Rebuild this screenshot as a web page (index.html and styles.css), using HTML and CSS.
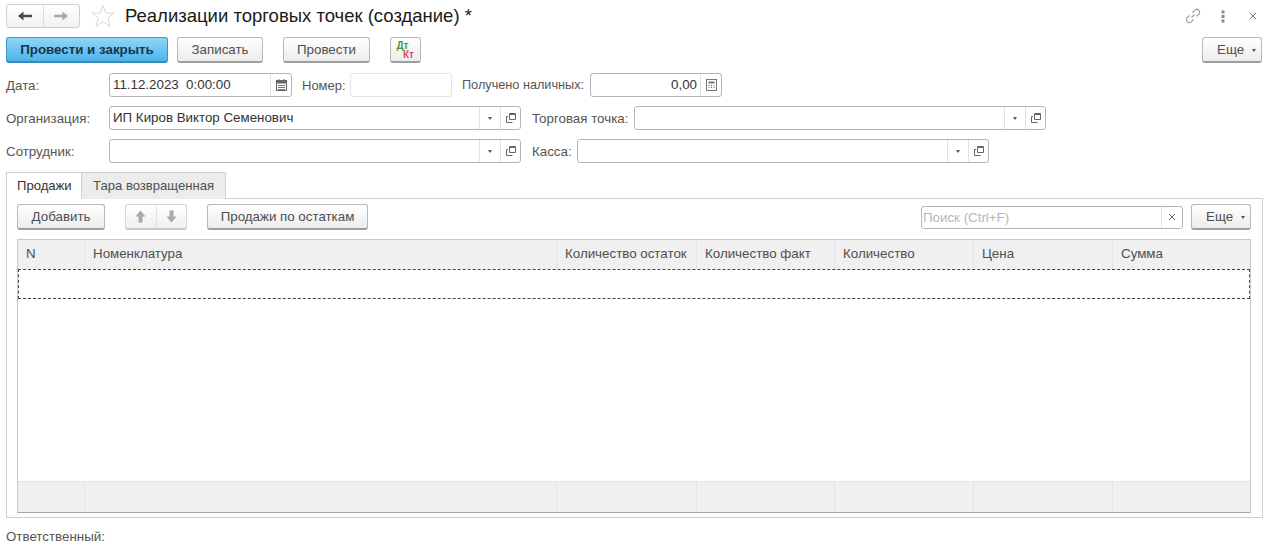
FILE: index.html
```html
<!DOCTYPE html>
<html lang="ru">
<head>
    <meta charset="UTF-8">
    <title>Реализации торговых точек (создание)</title>
    <link rel="stylesheet" href="styles.css">
</head>
<body>
    <header class="title-bar">
        <div class="nav-group">
            <button class="nav-btn">
                <svg width="16" height="12" viewBox="0 0 16 12"><path d="M1 6 6.5 1.5V4.8H15V7.2H6.5V10.5Z" fill="#4a4a4a"/></svg>
            </button>
            <button class="nav-btn">
                <svg width="16" height="12" viewBox="0 0 16 12"><path d="M15 6 9.500 1.500V4.800H1V7.200H9.500V10.500Z" fill="#a8a8a8"/></svg>
            </button>
        </div>
        <svg class="star" width="24" height="24" viewBox="0 0 24 24"><path d="M12 1.500 15 9H23L16.800 14 19 22.500 12 17.800 5 22.500 7.200 14 1 9H9Z" fill="#fff" stroke="#d8d8d8"/></svg>
        <h1 class="title">Реализации торговых точек (создание) *</h1>
        <div class="window-icons">
            <svg width="16" height="16" viewBox="0 0 16 16" fill="none" stroke="#a0a0a0" stroke-width="1.200"><path d="M6.500 9.500 9.500 6.500M7.500 4.500 9.800 2.200a2.600 2.600 0 0 1 4 4L11.500 8.500M8.500 11.500 6.200 13.800a2.600 2.600 0 0 1-4-4L4.500 7.500"/></svg>
            <svg class="icon-dots" width="4" height="13" viewBox="0 0 4 13" fill="#8a8a8a"><rect x="0.500" y="0.500" width="3" height="3"/><rect x="0.500" y="5" width="3" height="3"/><rect x="0.500" y="9.500" width="3" height="3"/></svg>
            <svg class="icon-close" width="10" height="10" viewBox="0 0 10 10" stroke="#777" stroke-width="1"><path d="M2 2 8 8M8 2 2 8"/></svg>
        </div>
    </header>

    <div class="command-bar">
        <button class="btn btn-primary">Провести и закрыть</button>
        <button class="btn btn-save">Записать</button>
        <button class="btn btn-post">Провести</button>
        <button class="btn btn-dtkt"><span class="dt">Дт</span><span class="kt">Кт</span></button>
        <button class="btn btn-more push-right">Еще <span class="caret"></span></button>
    </div>

    <div class="form-row">
        <label class="label label-main">Дата:</label>
        <div class="field field-date">
            <span class="field-value">11.12.2023&nbsp; 0:00:00</span>
            <span class="field-btn">
                <svg width="11" height="12" viewBox="0 0 11 12"><rect x="0.500" y="1.500" width="10" height="10" fill="#fff" stroke="#666"/><rect x="0.500" y="1.500" width="10" height="3" fill="#666"/><path d="M2 6.500H9M2 8.500H9M2 10.500H9" stroke="#777"/><path d="M3 0V2M8 0V2" stroke="#666"/></svg>
            </span>
        </div>
        <label class="label label-number">Номер:</label>
        <div class="field field-number disabled"></div>
        <label class="label label-cash">Получено наличных:</label>
        <div class="field field-cash">
            <span class="field-value right">0,00</span>
            <span class="field-btn">
                <svg width="11" height="12" viewBox="0 0 11 12"><rect x="0.500" y="0.500" width="10" height="11" fill="#fff" stroke="#777"/><rect x="2.500" y="2.500" width="6" height="2" fill="#777"/><path d="M2.500 6.500h1M5 6.500h1M7.500 6.500h1M2.500 8.500h1M5 8.500h1M7.500 8.500h1" stroke="#666"/></svg>
            </span>
        </div>
    </div>

    <div class="form-row">
        <label class="label label-main">Организация:</label>
        <div class="field field-org">
            <span class="field-value">ИП Киров Виктор Семенович</span>
            <span class="field-btn"><span class="caret dark"></span></span>
            <span class="field-btn"><svg width="12" height="12" viewBox="0 0 12 12" fill="none" stroke="#666"><path d="M4.500 1.500H10.500V7.500H4.500Z"/><path d="M4.500 2.500H10.500" /><path d="M1.500 4.500V10.500H7.500M1.500 4.500H3"/></svg></span>
        </div>
        <label class="label label-point">Торговая точка:</label>
        <div class="field field-org">
            <span class="field-value"></span>
            <span class="field-btn"><span class="caret dark"></span></span>
            <span class="field-btn"><svg width="12" height="12" viewBox="0 0 12 12" fill="none" stroke="#666"><path d="M4.500 1.500H10.500V7.500H4.500Z"/><path d="M4.500 2.500H10.500" /><path d="M1.500 4.500V10.500H7.500M1.500 4.500H3"/></svg></span>
        </div>
    </div>

    <div class="form-row">
        <label class="label label-main">Сотрудник:</label>
        <div class="field field-org">
            <span class="field-value"></span>
            <span class="field-btn"><span class="caret dark"></span></span>
            <span class="field-btn"><svg width="12" height="12" viewBox="0 0 12 12" fill="none" stroke="#666"><path d="M4.500 1.500H10.500V7.500H4.500Z"/><path d="M4.500 2.500H10.500" /><path d="M1.500 4.500V10.500H7.500M1.500 4.500H3"/></svg></span>
        </div>
        <label class="label label-kassa">Касса:</label>
        <div class="field field-org">
            <span class="field-value"></span>
            <span class="field-btn"><span class="caret dark"></span></span>
            <span class="field-btn"><svg width="12" height="12" viewBox="0 0 12 12" fill="none" stroke="#666"><path d="M4.500 1.500H10.500V7.500H4.500Z"/><path d="M4.500 2.500H10.500" /><path d="M1.500 4.500V10.500H7.500M1.500 4.500H3"/></svg></span>
        </div>
    </div>

    <div class="tabs">
        <div class="tab active">Продажи</div>
        <div class="tab">Тара возвращенная</div>
    </div>

    <section class="tab-panel">
        <div class="toolbar">
            <button class="btn btn-add">Добавить</button>
            <div class="arrow-group">
                <button class="arrow-btn"><svg width="11" height="13" viewBox="0 0 11 13"><path d="M5.500 0.500 10.500 6.500H7.500V12.500H3.500V6.500H0.500Z" fill="#a9a9a9"/></svg></button>
                <button class="arrow-btn"><svg width="11" height="13" viewBox="0 0 11 13"><path d="M5.500 12.500 10.500 6.500H7.500V0.500H3.500V6.500H0.500Z" fill="#a9a9a9"/></svg></button>
            </div>
            <button class="btn btn-rest">Продажи по остаткам</button>
            <div class="field field-search push-right">
                <span class="field-value placeholder">Поиск (Ctrl+F)</span>
                <span class="field-btn"><svg width="8" height="8" viewBox="0 0 8 8" stroke="#666"><path d="M1 1 7 7M7 1 1 7"/></svg></span>
            </div>
            <button class="btn btn-more">Еще <span class="caret"></span></button>
        </div>

        <div class="grid">
            <div class="grid-row grid-head">
                <div class="cell">N</div>
                <div class="cell">Номенклатура</div>
                <div class="cell">Количество остаток</div>
                <div class="cell">Количество факт</div>
                <div class="cell">Количество</div>
                <div class="cell">Цена</div>
                <div class="cell">Сумма</div>
            </div>
            <div class="grid-current"></div>
            <div class="grid-body"></div>
            <div class="grid-row grid-foot">
                <div class="cell"></div>
                <div class="cell"></div>
                <div class="cell"></div>
                <div class="cell"></div>
                <div class="cell"></div>
                <div class="cell"></div>
                <div class="cell"></div>
            </div>
        </div>
    </section>

    <footer class="responsible">Ответственный:</footer>
</body>
</html>
```

FILE: styles.css
```css
* {
    box-sizing: border-box;
}
html, body {
    height: 100%;
}
body {
    margin: 0;
    padding: 4px 6px 0;
    background-color: #fff;
    color: #4f4f4f;
    font-family: "Liberation Sans", Arial, sans-serif;
    font-size: 13.33px;
    overflow: hidden;
}
button {
    font-family: inherit;
    font-size: inherit;
    color: inherit;
    padding: 0;
}

/* title */
.title-bar {
    display: flex;
    align-items: center;
    height: 24px;
}
.nav-group {
    display: flex;
    width: 74px;
    height: 24px;
    border: 1px solid #cfcfcf;
    border-radius: 3px;
    background: linear-gradient(#fff, #f1f1f1);
}
.nav-btn {
    flex: 1;
    border: 0;
    background: none;
    display: flex;
    align-items: center;
    justify-content: center;
}
.nav-btn + .nav-btn {
    border-left: 1px solid #dcdcdc;
}
.star {
    margin-left: 11px;
}
.title {
    margin: 0 0 0 10px;
    font-size: 18.5px;
    font-weight: normal;
    color: #1a1a1a;
}
.window-icons {
    margin-left: auto;
    display: flex;
    align-items: center;
    padding-right: 5px;
}
.icon-dots {
    margin-left: 20px;
}
.icon-close {
    margin-left: 23px;
}

/* buttons */
.command-bar {
    display: flex;
    align-items: center;
    margin-top: 9px;
    height: 26px;
}
.btn {
    height: 26px;
    border: 1px solid #b8b8b8;
    border-bottom: 2px solid #9d9d9d;
    border-radius: 3px;
    background: linear-gradient(#fff, #ececec);
    white-space: nowrap;
}
.btn-primary {
    width: 162px;
    border-color: #3f95c4;
    border-bottom-color: #3a8ab6;
    background: linear-gradient(#8fd6f8, #4db4ea);
    color: #17364a;
    font-weight: bold;
}
.btn-save {
    width: 86px;
    margin-left: 9px;
}
.btn-post {
    width: 87px;
    margin-left: 20px;
}
.btn-dtkt {
    width: 31px;
    margin-left: 20px;
    display: flex;
    flex-direction: column;
    align-items: center;
    justify-content: center;
    font-size: 10px;
    font-weight: bold;
    line-height: 9px;
}
.dt {
    color: #2f9e55;
    margin-right: 6px;
}
.kt {
    color: #d9505f;
    margin-left: 6px;
}
.btn-more {
    width: 60px;
    padding-left: 14px;
    text-align: left;
}
.push-right {
    margin-left: auto;
}
.command-bar .btn-more {
    margin-right: 1px;
}
.caret {
    display: inline-block;
    margin-left: 4px;
    vertical-align: middle;
    border-left: 2.500px solid transparent;
    border-right: 2.500px solid transparent;
    border-top: 3px solid #555;
}
.caret.dark {
    margin: 0;
}

/* form */
.form-row {
    display: flex;
    align-items: center;
    height: 24px;
    margin-top: 9px;
}
.command-bar + .form-row {
    margin-top: 10px;
}
.label {
    white-space: nowrap;
    color: #555;
}
.label-main {
    width: 103px;
}
.label-number {
    width: 48px;
    margin-left: 10px;
    font-size: 13px;
}
.label-cash {
    width: 128px;
    margin-left: 10px;
    font-size: 12.7px;
}
.label-point {
    width: 102px;
    margin-left: 11px;
}
.label-kassa {
    width: 45px;
    margin-left: 11px;
}
.field {
    display: flex;
    height: 24px;
    border: 1px solid #b5b5b5;
    border-radius: 3px;
    background-color: #fff;
    color: #333;
}
.field-value {
    flex: 1;
    padding: 0 3px;
    line-height: 22px;
    white-space: nowrap;
    overflow: hidden;
}
.field-value.right {
    text-align: right;
}
.field-btn {
    width: 21px;
    display: flex;
    align-items: center;
    justify-content: center;
    border-left: 1px solid #e2e2e2;
}
.field-date {
    width: 183px;
}
.field-number {
    width: 102px;
}
.field-number.disabled {
    border-color: #e3e3e3;
}
.field-cash {
    width: 132px;
}
.field-org {
    width: 412px;
}
.field-org .field-btn {
    width: 21px;
}
.field-org .field-btn:last-child {
    width: 20px;
}
.field-search {
    width: 262px;
    height: 23px;
    margin-right: 8px;
}
.placeholder {
    color: #b5b5b5;
    padding-left: 1px;
}

/* tabs */
.tabs {
    display: flex;
    height: 27px;
    margin-top: 9px;
}
.tab {
    padding: 0 11px;
    line-height: 25px;
    font-size: 13.1px;
    border: 1px solid #d0d0d0;
    border-bottom: 0;
    background-color: #ececec;
    margin-left: -1px;
}
.tab:first-child {
    margin-left: 0;
    padding: 0 10px;
    width: 76px;
}
.tab.active {
    position: relative;
    background-color: #fff;
    color: #333;
    height: 27px;
    z-index: 1;
}
.tab-panel {
    height: 320px;
    margin-top: -1px;
    padding: 5px 11px 4px 10px;
    border: 1px solid #cfcfcf;
    display: flex;
    flex-direction: column;
}
.toolbar {
    display: flex;
    align-items: center;
    height: 26px;
}
.btn-add {
    width: 88px;
}
.arrow-group {
    display: flex;
    width: 62px;
    height: 26px;
    margin-left: 20px;
    border: 1px solid #d8d8d8;
    border-bottom: 2px solid #c8c8c8;
    border-radius: 3px;
    background: linear-gradient(#fff, #f0f0f0);
}
.arrow-btn {
    flex: 1;
    border: 0;
    background: none;
    display: flex;
    align-items: center;
    justify-content: center;
}
.arrow-btn + .arrow-btn {
    border-left: 1px solid #e2e2e2;
}
.btn-rest {
    width: 161px;
    margin-left: 20px;
}

/* table */
.grid {
    flex: 1;
    margin-top: 9px;
    border: 1px solid #c8c8c8;
    border-bottom-color: #a8a8a8;
    display: flex;
    flex-direction: column;
}
.grid-row {
    display: grid;
    grid-template-columns: 66px 472px 140px 138px 139px 139px 1fr;
    background-color: #f0f0f0;
}
.grid-head {
    height: 29px;
}
.grid-foot {
    height: 31px;
    border-top: 1px solid #e2e2e2;
}
.cell {
    padding-left: 8px;
    line-height: 27px;
    white-space: nowrap;
    border-left: 1px solid #e3e3e3;
}
.cell:first-child {
    border-left: 0;
}
.grid-current {
    height: 30px;
    border: 1px dashed #444;
}
.grid-body {
    flex: 1;
}

.responsible {
    margin-top: 11px;
    color: #555;
}
```
